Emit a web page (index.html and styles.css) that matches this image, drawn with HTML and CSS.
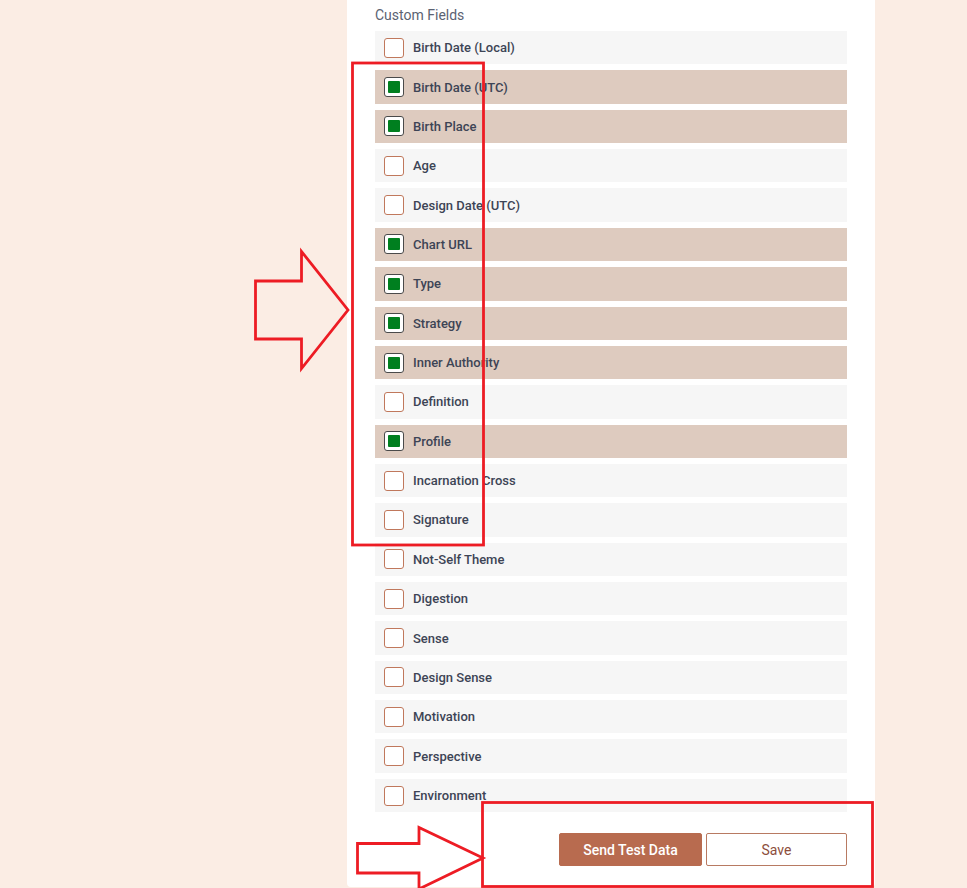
FILE: index.html
```html
<!DOCTYPE html>
<html>
<head>
<meta charset="utf-8">
<link rel="stylesheet" href="styles.css">
</head>
<body>
<div class="page">
  <div class="card">
    <div class="section-title">Custom Fields</div>
    <div class="fields">
      <label class="field"><span class="box"></span><span class="name">Birth Date (Local)</span></label>
      <label class="field on"><span class="box"></span><span class="name">Birth Date (UTC)</span></label>
      <label class="field on"><span class="box"></span><span class="name">Birth Place</span></label>
      <label class="field"><span class="box"></span><span class="name">Age</span></label>
      <label class="field"><span class="box"></span><span class="name">Design Date (UTC)</span></label>
      <label class="field on"><span class="box"></span><span class="name">Chart URL</span></label>
      <label class="field on"><span class="box"></span><span class="name">Type</span></label>
      <label class="field on"><span class="box"></span><span class="name">Strategy</span></label>
      <label class="field on"><span class="box"></span><span class="name">Inner Authority</span></label>
      <label class="field"><span class="box"></span><span class="name">Definition</span></label>
      <label class="field on"><span class="box"></span><span class="name">Profile</span></label>
      <label class="field"><span class="box"></span><span class="name">Incarnation Cross</span></label>
      <label class="field"><span class="box"></span><span class="name">Signature</span></label>
      <label class="field"><span class="box"></span><span class="name">Not-Self Theme</span></label>
      <label class="field"><span class="box"></span><span class="name">Digestion</span></label>
      <label class="field"><span class="box"></span><span class="name">Sense</span></label>
      <label class="field"><span class="box"></span><span class="name">Design Sense</span></label>
      <label class="field"><span class="box"></span><span class="name">Motivation</span></label>
      <label class="field"><span class="box"></span><span class="name">Perspective</span></label>
      <label class="field"><span class="box"></span><span class="name">Environment</span></label>
    </div>
    <div class="actions">
      <button class="btn primary">Send Test Data</button>
      <button class="btn outline">Save</button>
    </div>
  </div>
</div>
<svg class="annot" width="967" height="888" viewBox="0 0 967 888">
  <g fill="none" stroke="#ed1c24" stroke-width="2.8">
    <rect x="352.5" y="63" width="131" height="482"/>
    <rect x="482.5" y="802.5" width="390" height="84"/>
    <polygon points="255.5,281 301.5,281 301.5,251.5 348,310 301.5,368.5 301.5,339 255.5,339"/>
    <polygon points="357.5,843.5 419,843.5 419,827.5 483,858 419,889 419,873 357.5,873"/>
  </g>
</svg>
</body>
</html>
```
FILE: styles.css
```css
html, body {
  margin: 0;
  padding: 0;
  background: #fbede4;
  font-family: Roboto, "Liberation Sans", Arial, sans-serif;
}
.page {
  height: 888px;
  overflow: hidden;
  padding-left: 347px;
}
.card {
  width: 528px;
  box-sizing: border-box;
  background: #ffffff;
  padding: 6px 28px 20px 28px;
  border-radius: 0 0 4px 4px;
  min-height: 887px;
}
.section-title {
  font-size: 14px;
  line-height: 18px;
  color: #5b6272;
  margin-bottom: 7px;
}
.fields {
  display: flex;
  flex-direction: column;
  gap: 6px;
}
.field {
  display: flex;
  align-items: center;
  height: 33.37px;
  background: #f6f6f6;
  padding-left: 9px;
  box-sizing: border-box;
}
.field.on {
  background: #decbbf;
}
.box {
  width: 20px;
  height: 20px;
  box-sizing: border-box;
  border: 1px solid #c0785c;
  border-radius: 3px;
  background: #ffffff;
  padding: 3px;
  margin-right: 9px;
  flex: none;
}
.field.on .box {
  border-color: #4a4a4a;
}
.field.on .box::after {
  content: "";
  display: block;
  width: 12px;
  height: 12px;
  border-radius: 1px;
  background: #007f1f;
}
.name {
  font-size: 13px;
  font-weight: 500;
  color: #3d4455;
}
.actions {
  display: flex;
  justify-content: flex-end;
  gap: 4px;
  margin-top: 21px;
}
.btn {
  height: 33px;
  font-family: Roboto, "Liberation Sans", Arial, sans-serif;
  font-size: 14px;
  border-radius: 2px;
  cursor: pointer;
}
.btn.primary {
  width: 143px;
  background: #b86b4f;
  border: 1px solid #b86b4f;
  color: #ffffff;
  font-weight: 500;
}
.btn.outline {
  width: 141px;
  background: #ffffff;
  border: 1px solid #b87a62;
  color: #8d4e3c;
}
.annot {
  position: absolute;
  left: 0;
  top: 0;
  pointer-events: none;
}
```
